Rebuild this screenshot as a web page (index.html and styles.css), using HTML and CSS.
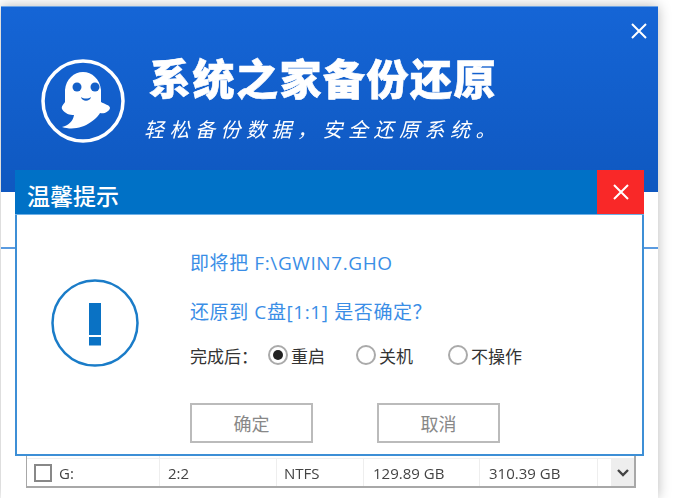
FILE: index.html
```html
<!DOCTYPE HTML>
<html lang="en">
  <head>
    <title>系统之家备份还原</title>
    <meta charset="utf-8">
    <link rel="stylesheet" href="styles.css">
  </head>
  <body>

  <div class="window">
    <div class="header">
      <svg class="logo" viewBox="0 0 84 84">
        <circle cx="42" cy="42" r="40" fill="none" stroke="#fff" stroke-width="3.5"/>
        <path d="M21 68 C28 66 32 62 33 56 C29 56 24 55 21 50 C20 47 23 45 24 43 L24 31 C25 20 33 13 42 13 C51 13 59 20 60 31 L60 43 C63 45 69 46 69 49 C68 53 63 55 59 54 C56 60 40 74 21 68 Z" fill="#fff"/>
        <circle cx="36" cy="28" r="4.500" fill="#1460c8"/>
        <circle cx="54" cy="28" r="4.500" fill="#1460c8"/>
        <path d="M40 38 C43 40 47 40 50 38 C49 43 41 43 40 38 Z" fill="#1460c8"/>
      </svg>
      <div class="brand">
        <div class="brand-title">系统之家备份还原</div>
        <div class="brand-sub">轻松备份数据，安全还原系统。</div>
      </div>
      <svg class="win-close" viewBox="0 0 16 16"><path d="M1 1 L15 15 M15 1 L1 15" stroke="#fff" stroke-width="2"/></svg>
    </div>

    <div class="content">
      <div class="rule"></div>
      <div class="disk-table">
        <div class="disk-row">
          <span class="cell cell-name"><i class="check"></i></span>
        </div>
        <div class="disk-row">
          <span class="cell cell-name"><i class="check"></i>G:</span>
          <span class="cell cell-part">2:2</span>
          <span class="cell cell-fs">NTFS</span>
          <span class="cell cell-free">129.89 GB</span>
          <span class="cell cell-total">310.39 GB</span>
          <span class="scroll-btn">
            <svg viewBox="0 0 12 8" width="12" height="8"><path d="M1 1 L6 6 L11 1" fill="none" stroke="#444" stroke-width="2.400"/></svg>
          </span>
        </div>
      </div>
    </div>

    <div class="dialog">
      <div class="dialog-bar">
        <span class="dialog-title">温馨提示</span>
        <span class="dialog-close">
          <svg viewBox="0 0 16 16" width="16" height="16"><path d="M1 1 L15 15 M15 1 L1 15" stroke="#fff" stroke-width="2"/></svg>
        </span>
      </div>
      <div class="dialog-body">
        <svg class="warn" viewBox="0 0 88 88">
          <circle cx="44" cy="44" r="42.500" fill="none" stroke="#1a7cc8" stroke-width="2.500"/>
          <rect x="38" y="24" width="12" height="32" fill="#0a72c4"/>
          <rect x="38" y="58" width="12" height="8.500" fill="#0a72c4"/>
        </svg>
        <div class="dialog-main">
          <div class="line">即将把 F:\GWIN7.GHO</div>
          <div class="line">还原到 C盘[1:1] 是否确定？</div>
          <div class="options">
            <span class="opt-label">完成后：</span>
            <span class="opt opt-first"><i class="radio on"></i>重启</span>
            <span class="opt"><i class="radio"></i>关机</span>
            <span class="opt"><i class="radio"></i>不操作</span>
          </div>
          <div class="buttons">
            <button class="btn">确定</button>
            <button class="btn">取消</button>
          </div>
        </div>
      </div>
    </div>
  </div>

  </body>
</html>
```

FILE: styles.css
```css
html {
  height: 100%;
}
body {
  margin: 0;
  height: 100%;
  overflow: hidden;
  background: #fff;
  font-family: "Open Sans", "Noto Sans CJK SC", sans-serif;
  color: #333;
}

.window {
  position: relative;
  width: 657px;
  height: 492px;
  margin: 6px 0 0 1px;
  background: #fff;
  box-shadow: 0 0 12px rgba(0,0,0,0.28);
  display: flex;
  flex-direction: column;
  filter: blur(0.4px);
}

.header {
  position: relative;
  height: 186px;
  box-sizing: border-box;
  padding: 35px 0 0 40px;
  background: linear-gradient(#1565d6, #0f58c0);
  border-top: 1px solid #6ea4e4;
  display: flex;
  align-items: flex-start;
  gap: 21px;
}
.logo {
  width: 84px;
  height: 84px;
  margin-top: 17px;
}
.brand {
  color: #fff;
  margin-top: 11px;
  font-family: "Noto Sans CJK SC", sans-serif;
}
.brand-title {
  font-size: 42px;
  font-weight: 900;
  line-height: 48px;
  letter-spacing: 1.500px;
  margin-left: 3px;
  -webkit-text-stroke: 0.6px #fff;
}
.brand-sub {
  font-size: 20px;
  line-height: 26px;
  letter-spacing: 5.500px;
  font-style: italic;
  margin: 15px 0 0 -2px;
}
.win-close {
  position: absolute;
  top: 16px;
  right: 11px;
  width: 16px;
  height: 16px;
}

.content {
  flex: 1;
  display: flex;
  flex-direction: column;
  padding: 0 22px 10px 25px;
}
.rule {
  height: 2px;
  margin: 55px -22px auto -25px;
  background: #5a9be0;
}
.disk-table {
  border: 2px solid #a8a8a8;
  border-width: 0 2px 2px 1px;
}
.disk-row {
  display: flex;
  align-items: center;
  height: 27px;
  font-size: 15px;
  font-weight: 500;
  color: #444;
  border-top: 1px solid #eee;
}
.cell {
  display: flex;
  align-items: center;
  height: 100%;
  box-sizing: border-box;
  padding-left: 8px;
  border-right: 1px solid #eee;
}
.cell-name { width: 133px; padding-left: 7px; gap: 7px; }
.cell-part { width: 117px; }
.cell-fs { width: 87px; padding-left: 7px; }
.cell-free { width: 116px; padding-left: 9px; }
.cell-total { width: 118px; padding-left: 9px; }
.check {
  width: 18px;
  height: 18px;
  border: 2px solid #888;
  box-sizing: border-box;
}
.scroll-btn {
  margin-left: auto;
  width: 23px;
  height: 27px;
  background: #eee;
  display: flex;
  align-items: center;
  justify-content: center;
}

.dialog {
  position: absolute;
  left: 14px;
  top: 164px;
  width: 629px;
  height: 286px;
  box-sizing: border-box;
  background: #fff;
  border: 2px solid #3d8fd6;
  border-top: 0;
  display: flex;
  flex-direction: column;
}
.dialog-bar {
  height: 44px;
  margin: 0 -2px;
  background: #0071c6;
  border-bottom: 1px solid #6fb0e6;
  display: flex;
  align-items: center;
  justify-content: space-between;
}
.dialog-title {
  color: #fff;
  font-family: "Noto Sans CJK SC", sans-serif;
  font-size: 23px;
  font-weight: 500;
  padding-left: 12px;
  margin-top: 5px;
}
.dialog-close {
  width: 47px;
  height: 44px;
  background: #f92828;
  display: flex;
  align-items: center;
  justify-content: center;
}

.dialog-body {
  display: flex;
  flex: 1;
}
.warn {
  width: 88px;
  height: 88px;
  margin: 64px 0 0 34px;
}
.dialog-main {
  margin-left: 51px;
  padding-top: 33px;
}
.line {
  font-size: 19px;
  letter-spacing: 0.6px;
  line-height: 30px;
  height: 49px;
  color: #3a8ee6;
}
.options {
  display: flex;
  align-items: center;
  font-size: 17px;
  height: 30px;
  margin-top: -6px;
}
.opt-label {
  width: 78px;
}
.opt {
  display: flex;
  align-items: center;
  width: 92px;
  gap: 3px;
}
.opt-first {
  width: 88px;
}
.radio {
  width: 20px;
  height: 20px;
  box-sizing: border-box;
  border: 2px solid #aaa;
  border-radius: 50%;
  position: relative;
}
.radio.on::after {
  content: "";
  position: absolute;
  left: 3px;
  top: 3px;
  width: 10px;
  height: 10px;
  border-radius: 50%;
  background: #222;
}
.buttons {
  display: flex;
  gap: 64px;
  margin-top: 33px;
}
.btn {
  width: 123px;
  height: 40px;
  background: #fff;
  border: 2px solid #bbb;
  color: #888;
  font-family: inherit;
  font-size: 18px;
}
```
